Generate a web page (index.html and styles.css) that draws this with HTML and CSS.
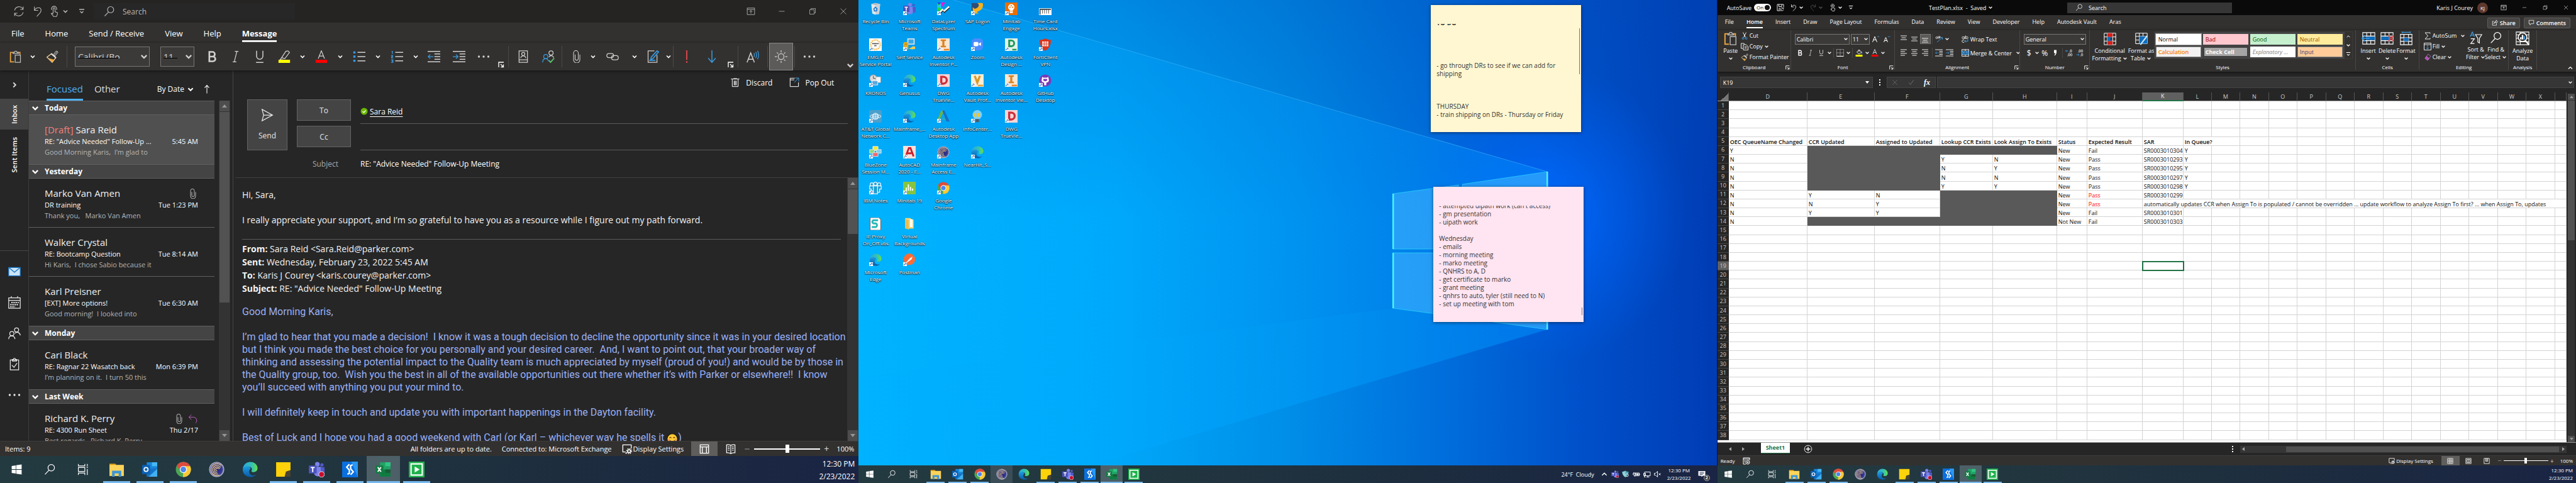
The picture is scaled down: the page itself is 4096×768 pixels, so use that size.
FILE: index.html
```html
<!DOCTYPE html>
<html lang="en">
<head>
<meta charset="utf-8">
<title>Desktop</title>
<link rel="stylesheet" href="styles.css">
</head>
<body>
<svg class="sprite" width="0" height="0" aria-hidden="true">
<defs>
<linearGradient id="gEdge" x1="0" y1="0" x2="1" y2="0"><stop offset="0" stop-color="#2aa5e0"/><stop offset=".6" stop-color="#35c1b5"/><stop offset="1" stop-color="#63e04a"/></linearGradient>
<linearGradient id="gEdge2" x1="0" y1="0" x2="0" y2="1"><stop offset="0" stop-color="#1b9de2"/><stop offset="1" stop-color="#0c59a4"/></linearGradient>
<radialGradient id="gOrb"><stop offset="0" stop-color="#1c1c7c"/><stop offset=".75" stop-color="#3a3f92"/><stop offset="1" stop-color="#c9c9d8"/></radialGradient>
</defs>
<symbol id="chev" viewBox="0 0 10 10"><path d="M2 3.5l3 3 3-3" stroke-width="1.6"/></symbol>
<symbol id="chevup" viewBox="0 0 10 10"><path d="M2 6.5l3-3 3 3" stroke-width="1.2"/></symbol>
<symbol id="more" viewBox="0 0 24 24"><g fill="currentColor" stroke="none"><circle cx="3" cy="12" r="2"/><circle cx="12" cy="12" r="2"/><circle cx="21" cy="12" r="2"/></g></symbol>
<symbol id="launch" viewBox="0 0 10 10"><path d="M1 9V1h8M4 4l4.500 4.500M8.500 4.500v4h-4" stroke-width="1.3"/></symbol>
<symbol id="cust" viewBox="0 0 10 10"><path d="M1 2h8M2.500 5l2.500 2.500L7.500 5" stroke-width="1.3"/></symbol>
<symbol id="sync" viewBox="0 0 24 24"><path d="M3 10a9.500 9.500 0 0 1 17.500-3M21 2v6h-6M21 14a9.500 9.500 0 0 1-17.500 3M3 22v-6h6"/></symbol>
<symbol id="undo" viewBox="0 0 24 24"><path d="M5 2v8h8M5 10c5-8 14-7 14 0 0 5-5 8-9 13"/></symbol>
<symbol id="redo" viewBox="0 0 24 24"><path d="M19 2v8h-8M19 10C14 2 5 3 5 10c0 5 5 8 9 13"/></symbol>
<symbol id="touch" viewBox="0 0 24 24"><path d="M10 16V6.500a2 2 0 0 1 4 0V13l5 1.500v4L17 23h-6l-5-6 2-1 2 2M7 9a5.500 5.500 0 1 1 10 0"/></symbol>
<symbol id="glass" viewBox="0 0 24 24"><circle cx="14.500" cy="8.500" r="6.500"/><path d="M10 13.500L2 22"/></symbol>
<symbol id="ribbonup" viewBox="0 0 24 24"><path d="M2 3h20v18H2zM2 7h20M12 18v-8M8 13.500l4-4 4 4"/></symbol>
<symbol id="min" viewBox="0 0 24 24"><path d="M3 12h18"/></symbol>
<symbol id="restore" viewBox="0 0 24 24"><path d="M3 7h14v14H3zM7 7V3h14v14h-4"/></symbol>
<symbol id="close" viewBox="0 0 24 24"><path d="M3 3l18 18M21 3L3 21"/></symbol>
<symbol id="paste" viewBox="0 0 24 24"><path d="M8 4H2v18h7M16 4h4v4" stroke="#e8a33d" stroke-width="2.200"/><path d="M7 6V4h2.500a2.500 2.500 0 0 1 5 0H17v2zM11 9h10v14H11z" stroke="#bdbdbd"/></symbol>
<symbol id="brush" viewBox="0 0 24 24"><path d="M22 2l-7 8M20 1l3 3-6 7-3-3z" stroke="#ccc" stroke-width="1.200"/><path d="M10 7l9 7-7 9L2 13z" stroke="#ffe0a8"/><path d="M5 15l11 3-4 5z" fill="#f0a63c" stroke="none"/><path d="M10 6l9 8" stroke="#ddd" stroke-width="2.500"/></symbol>
<symbol id="bold" viewBox="0 0 24 24"><path d="M7 3h6a4.500 4.500 0 0 1 0 9H7zM7 12h7a4.500 4.500 0 0 1 0 9H7z" stroke-width="3.200"/></symbol>
<symbol id="italic" viewBox="0 0 24 24"><path d="M10 2h7M6 22h7M14 2l-5 20"/></symbol>
<symbol id="under" viewBox="0 0 24 24"><path d="M6 1v10a6 6 0 0 0 12 0V1M5 23h14" stroke-width="1.800"/></symbol>
<symbol id="hilite" viewBox="0 0 24 24"><path d="M19 1l3 3-9 12-6-2 8-12zM7 14l-3 4h6"/><path d="M1 18h22v6H1z" fill="#ff0" stroke="none"/></symbol>
<symbol id="fcolor" viewBox="0 0 24 24"><path d="M6 16L12 1l6 15M8 11h8"/><path d="M1 18h22v6H1z" fill="#f00" stroke="none"/></symbol>
<symbol id="bullets" viewBox="0 0 24 24"><path d="M9 4h15M9 12h15M9 20h15" stroke-width="1.800"/><path d="M1 4h4M1 12h4M1 20h4" stroke="#3a9be0" stroke-width="4"/></symbol>
<symbol id="nums" viewBox="0 0 24 24"><path d="M9 4h15M9 12h15M9 20h15" stroke-width="1.800"/><path d="M2 2h1.500v5M1 10h3v2H2v2.500h3M1 18h3.500v5H1M2 20.500h2.500" stroke="#3a9be0"/></symbol>
<symbol id="outdent" viewBox="0 0 24 24"><path d="M0 2h24M13 7h11M13 12h11M13 17h11M0 22h24" stroke-width="1.800"/><path d="M11 12H1M5 8l-4 4 4 4" stroke="#3a9be0"/></symbol>
<symbol id="indent" viewBox="0 0 24 24"><path d="M0 2h24M13 7h11M13 12h11M13 17h11M0 22h24" stroke-width="1.800"/><path d="M0 12h10M6 8l4 4-4 4" stroke="#3a9be0"/></symbol>
<symbol id="card" viewBox="0 0 24 24"><path d="M4 1h16v22H4zM4 18h16M7 15c1-6 9-6 10 0"/><circle cx="12" cy="7" r="3"/></symbol>
<symbol id="people" viewBox="0 0 24 24"><circle cx="17" cy="5" r="4"/><path d="M13 13c2-4 8-3 9 1"/><g stroke="#3a9be0"><circle cx="7" cy="12" r="4"/><path d="M1 23c0-9 10-9 11-2"/></g><path d="M13 19l3 4 7-8" stroke="#5fce70" stroke-width="2"/></symbol>
<symbol id="people2" viewBox="0 0 24 24"><circle cx="16" cy="5.500" r="4"/><circle cx="7" cy="12.500" r="4"/><path d="M1 23c0-8 11-8 12 0M13 12c4-4 10-1 10 4"/></symbol>
<symbol id="clip" viewBox="0 0 24 24"><path d="M9 8v8a3 3 0 0 0 6 0V5a4 4 0 0 0-9 0v13a6 6 0 0 0 12 0V8" stroke-width="1.300"/></symbol>
<symbol id="link" viewBox="0 0 24 24"><rect x="1" y="6" width="13" height="8" rx="4"/><rect x="10" y="10" width="13" height="8" rx="4"/></symbol>
<symbol id="sign" viewBox="0 0 24 24"><path d="M15 1H3v22h17V9"/><path d="M20 1l3 2-11 13-4 2 1-5zM5 19h12" stroke="#3a9be0" stroke-width="2"/></symbol>
<symbol id="bang" viewBox="0 0 24 24"><path d="M12 0v18M12 20.500V24" stroke="#e0484c" stroke-width="2.200"/></symbol>
<symbol id="down" viewBox="0 0 24 24"><path d="M12 0v22M5 15l7 8 7-8" stroke="#3a9be0" stroke-width="1.800"/></symbol>
<symbol id="read" viewBox="0 0 24 24"><path d="M1 23L8 5l7 18M3.500 17h9" stroke-width="1.800"/><path d="M14 5q2 4 0 8M17.500 3q3 6 0 12M21 1q4 8 0 16" stroke="#3a9be0"/></symbol>
<symbol id="sun" viewBox="0 0 24 24"><circle cx="12" cy="12" r="5.500"/><path d="M12 0v4M12 20v4M0 12h4M20 12h4M4 4l2.500 2.500M17.500 17.500L20 20M4 20l2.500-2.500M17.500 6.500L20 4"/></symbol>
<symbol id="trash" viewBox="0 0 24 24"><path d="M2 4h20M8 3h8M5 5v17h14V5M9.500 8v11M12 8v11M14.500 8v11"/></symbol>
<symbol id="popout" viewBox="0 0 24 24"><path d="M13 2H2v20h20V12M2 6h10"/><path d="M12 12L22 2M14 1.500h8.500V10" stroke="#3a9be0"/></symbol>
<symbol id="send" viewBox="0 0 24 24"><path d="M2 1l20 11L2 23l3-11zM5 12h17"/></symbol>
<symbol id="uparr" viewBox="0 0 24 24"><path d="M12 23V2M6 8l6-7 6 7" stroke-width="1.800"/></symbol>
<symbol id="mail" viewBox="0 0 24 24"><path d="M1 4h22v16H1z" fill="#c9e3f8" stroke="#1a78c8"/><path d="M1 4l11 9L23 4" stroke="#1a78c8"/></symbol>
<symbol id="cal" viewBox="0 0 24 24"><path d="M1 3h22v20H1zM1 8h22M6 0v4M18 0v4"/><path d="M6 12h14M4 16h16M4 20h9" stroke-dasharray="2.500 1.500" stroke-width="2.500"/></symbol>
<symbol id="task" viewBox="0 0 24 24"><path d="M4 4h16v19H4zM8 6V3h2a2 2 0 0 1 4 0h2v3zM7 14l4 4 6-8"/></symbol>
<symbol id="reply" viewBox="0 0 24 24"><path d="M8 2L2 8l6 6M2 8h12a8 8 0 0 1 4 14" stroke="#b45cb8"/></symbol>
<symbol id="dispset" viewBox="0 0 24 24"><path d="M9 19H2V2h20v9M8 22h4" stroke-width="2"/><circle cx="17" cy="17" r="3.500" stroke-width="2.500"/><circle cx="17" cy="17" r="6" stroke-dasharray="2.500 2.200" stroke-width="2"/></symbol>
<symbol id="vnormal" viewBox="0 0 24 24"><path d="M2 2h20v20H2zM2 7h20M7 7v15M17 7v15" stroke-width="2"/></symbol>
<symbol id="vread" viewBox="0 0 24 24"><path d="M12 3q-5-2-10-1v19q5-1 10 2 5-3 10-2V2q-5-1-10 1v20M5 7h4M5 11h4M5 15h4M15 7h4M15 11h4M15 15h4" stroke-width="1.800"/></symbol>
<symbol id="vgrid" viewBox="0 0 24 24"><path d="M2 2h20v20H2zM2 9h20M2 15h20M9 2v20M15 2v20" stroke-width="1.800"/></symbol>
<symbol id="vpage" viewBox="0 0 24 24"><path d="M2 2h20v20H2zM6 6h12v12H6zM9 10h6M9 14h6" stroke-width="2"/></symbol>
<symbol id="vbreak" viewBox="0 0 24 24"><path d="M2 2h20v20H2zM8 2v11h8V2M12 2v10" stroke-width="2"/></symbol>
<symbol id="macro" viewBox="0 0 24 24"><path d="M22 9V2H2v20h8M2 6h20M5 11h4M5 15h3" stroke-width="2"/><circle cx="16" cy="16" r="6" stroke-width="2"/><circle cx="16" cy="16" r="2" fill="currentColor"/></symbol>
<symbol id="save" viewBox="0 0 24 24"><path d="M10 22H2V2h20v8M7 2v7h9V2M8 21v-7h3" stroke-width="1.800"/><path d="M12 17a5 5 0 0 1 9-2M22 11v4h-4M22 18a5 5 0 0 1-9 2M12 23v-4h4" stroke-width="1.600"/></symbol>
<symbol id="cut" viewBox="0 0 24 24"><path d="M7 1l8 16M17 1L9 17" stroke-width="1.800"/><g stroke="#3a9be0" stroke-width="2"><circle cx="7" cy="20" r="3"/><circle cx="17" cy="20" r="3"/></g></symbol>
<symbol id="copy" viewBox="0 0 24 24"><path d="M7 18H1V2h9l3 3M8 6h9l6 6v11H8zM12 13h7M12 17h7" stroke-width="1.800"/></symbol>
<symbol id="growA" viewBox="0 0 24 24"><path d="M1 22L8 4l7 18M3.500 15h9" stroke-width="2"/><path d="M16 6l3-3 3 3" stroke="#3a9be0" stroke-width="2"/></symbol>
<symbol id="shrinkA" viewBox="0 0 24 24"><path d="M3 22L9 7l6 15M5 17h8" stroke-width="2"/><path d="M16 3l3 3 3-3" stroke="#3a9be0" stroke-width="2"/></symbol>
<symbol id="borders" viewBox="0 0 24 24"><path d="M1 1h22v22M1 1v22M12 1v22M1 12h22" stroke-dasharray="2 2"/><path d="M1 23h22" stroke-width="2.500"/></symbol>
<symbol id="bucket" viewBox="0 0 24 24"><path d="M5 10l7-8 8 8-8 6zM12 2v7" stroke-width="1.800"/><path d="M21 9v6" stroke="#3a9be0" stroke-width="2.500"/><path d="M1 18h22v6H1z" fill="#ff0" stroke="none"/></symbol>
<symbol id="alT" viewBox="0 0 24 24"><path d="M2 2h20M5 8h14M2 14h20" stroke-width="1.800"/></symbol>
<symbol id="alM" viewBox="0 0 24 24"><path d="M2 6h20M5 12h14M2 18h20" stroke-width="1.800"/></symbol>
<symbol id="alB" viewBox="0 0 24 24"><path d="M2 10h20M5 16h14M2 22h20" stroke-width="1.800"/></symbol>
<symbol id="alL" viewBox="0 0 24 24"><path d="M2 2h20M2 8h14M2 14h20M2 20h14" stroke-width="1.800"/></symbol>
<symbol id="alC" viewBox="0 0 24 24"><path d="M2 2h20M5 8h14M2 14h20M5 20h14" stroke-width="1.800"/></symbol>
<symbol id="alR" viewBox="0 0 24 24"><path d="M2 2h20M8 8h14M2 14h20M8 20h14" stroke-width="1.800"/></symbol>
<symbol id="orient" viewBox="0 0 24 24"><circle cx="5" cy="8" r="3"/><path d="M7 5l4 6M10 3l5 7"/><circle cx="14" cy="6" r="2.500"/><path d="M6 22L22 8M16 7h7v7" stroke="#3a9be0" stroke-width="1.800"/></symbol>
<symbol id="wrap" viewBox="0 0 24 24"><circle cx="5" cy="8" r="3.500"/><path d="M9 4v8M13 1v11M9 17a4 4 0 1 0 0 4" stroke-width="1.800"/><circle cx="17" cy="8" r="3.500"/><path d="M20 13v6h-9M14 16l-3 3 3 4" stroke="#3a9be0" stroke-width="2"/></symbol>
<symbol id="merge" viewBox="0 0 24 24"><path d="M1 1h22v22H1zM1 6h22M1 18h22M12 1v5M12 18v5" stroke-width="1.600"/><path d="M2 7h20v10H2z" fill="#0e4f83" stroke="#3a9be0"/><path d="M5 12h14M8 9l-3 3 3 3M16 9l3 3-3 3" stroke="#8fd0ff"/></symbol>
<symbol id="cond" viewBox="0 0 24 24"><path d="M1 1h22v22H1zM1 8h22M1 16h22M7 1v22M17 1v22" stroke-width="1.200"/><path d="M7 1h10v7H7zM7 16h10v7H7z" fill="#d8201c" stroke="none"/><path d="M7 8h6v8H7z" fill="#0f6cbd" stroke="none"/></symbol>
<symbol id="fmtTable" viewBox="0 0 24 24"><path d="M1 1h22v20H1zM1 7h22M1 14h22M8 1v20M15 1v20" stroke-width="1.200"/><path d="M8 7h15v14H8z" fill="#0f6cbd" stroke="none"/><path d="M23 6L13 19l-3 4" stroke="#cfe6f8" stroke-width="2.500"/></symbol>
<symbol id="cinsert" viewBox="0 0 24 24"><path d="M2 2h21v20H2zM2 8h21M2 16h21M9 2v20M16 2v20" stroke-width="1.200"/><path d="M8 9h15v6H8z" fill="#0f6cbd" stroke="none"/><path d="M14 12H1M6 7l-5 5 5 5" stroke="#3a9be0" stroke-width="1.800"/></symbol>
<symbol id="cdelete" viewBox="0 0 24 24"><path d="M1 2h21v20H1zM1 8h21M1 16h21M8 2v20M15 2v20" stroke-width="1.200"/><path d="M2 9h13v6H2z" fill="#0f6cbd" stroke="none"/><path d="M14 7l9 10M23 7l-9 10" stroke="#e0484c" stroke-width="1.800"/></symbol>
<symbol id="cformat" viewBox="0 0 24 24"><path d="M2 5h20v18H2zM2 11h20M2 17h20M8 5v18M16 5v18" stroke-width="1.200"/><path d="M8 11h8v6H8z" fill="#0f6cbd" stroke="none"/><path d="M5 1.500h14M5 0v3M19 0v3" stroke="#3a9be0"/></symbol>
<symbol id="sigma" viewBox="0 0 24 24"><path d="M20 5V2H4l9 10L4 22h16v-3" stroke-width="1.800"/></symbol>
<symbol id="fill" viewBox="0 0 24 24"><path d="M1 1h22v22H1zM1 6h22" stroke-width="1.800"/><path d="M12 8v12M8 16l4 4 4-4" stroke="#3a9be0" stroke-width="2"/></symbol>
<symbol id="clear" viewBox="0 0 24 24"><path d="M14 2l8 7-10 13-8-7z" stroke="#c678c9" stroke-width="1.600"/><path d="M9 9l8 7-5 6-8-7z" fill="#b04ab5" stroke="#c678c9"/></symbol>
<symbol id="sort" viewBox="0 0 24 24"><path d="M1 10L5 1l4 9M2.500 7h5" stroke="#3a9be0" stroke-width="1.600"/><path d="M2 14h7l-7 9h7M11 6h12l-4.500 7v9l-3-2v-7z" stroke-width="1.400"/></symbol>
<symbol id="analyze" viewBox="0 0 24 24"><path d="M1 1h22v22H1zM1 6h22M1 12h22M1 18h22M8 1v22" stroke-width="1.200"/><circle cx="12" cy="10" r="7.500" fill="#323130" stroke-width="1.800"/><path d="M9 14v-4M12 14V6" stroke-width="2.500"/><path d="M15 14V8" stroke="#3a9be0" stroke-width="2.500"/><path d="M17 16l6 7" stroke-width="2.500"/></symbol>
<symbol id="share" viewBox="0 0 24 24"><path d="M8 7H3v15h15v-6M8 16q1-8 9-9V2l6 7-6 6v-5q-6 0-9 6z" stroke-width="1.800"/></symbol>
<symbol id="comment" viewBox="0 0 24 24"><path d="M3 3h18v13H11l-4 5v-5H3z" stroke-width="1.800"/></symbol>
<symbol id="decinc" viewBox="0 0 24 24"><path d="M9 6H1M4 3L1 6l3 3" stroke="#3a9be0" stroke-width="1.800"/><ellipse cx="18" cy="6" rx="2.500" ry="4"/><ellipse cx="12" cy="18" rx="2.500" ry="4"/><ellipse cx="19" cy="18" rx="2.500" ry="4"/><path d="M13 10h1.500M7 22h1.500" stroke-width="2"/></symbol>
<symbol id="decdec" viewBox="0 0 24 24"><path d="M1 18h9M7 15l3 3-3 3" stroke="#3a9be0" stroke-width="1.800"/><ellipse cx="12" cy="6" rx="2.500" ry="4"/><ellipse cx="19" cy="6" rx="2.500" ry="4"/><ellipse cx="19" cy="18" rx="2.500" ry="4"/><path d="M7 10h1.500M13 22h1.500" stroke-width="2"/></symbol>
<symbol id="comma" viewBox="0 0 24 24"><path d="M8 3h8v8q-1 7-6 10l-1-2q3-2 3-6H8z" fill="currentColor" stroke="none"/></symbol>
<symbol id="plusc" viewBox="0 0 24 24"><circle cx="12" cy="12" r="10"/><path d="M12 6v12M6 12h12" stroke-width="2.500"/></symbol>
<symbol id="check" viewBox="0 0 24 24"><path d="M3 13l6 7L21 3" stroke-width="2"/></symbol>
<symbol id="win" viewBox="0 0 24 24"><path d="M2 5l8-1.300v7.800H2zM11 3.500L22 2v9.500H11zM2 12.500h8v7.800L2 19zM11 12.500h11V22l-11-1.500z" fill="#fff" stroke="none"/></symbol>
<symbol id="tview" viewBox="0 0 24 24"><path d="M2 1v4h13V1M2 8h13v8H2zM2 23v-4h13v4M20 1v4M20 11v12M18.500 7.500h3"/></symbol>
<symbol id="folder" viewBox="0 0 24 24"><path d="M1 3h9l2 3H1z" fill="#e09a10"/><path d="M1 5h22v17H1z" fill="#fbd35a"/><path d="M5 23v-9h14v9h-4v-5H9v5z" fill="#3d95d8"/></symbol>
<symbol id="outlook" viewBox="0 0 24 24"><path d="M7 1h16v12H7z" fill="#1a86d8"/><path d="M15 1h8v6h-8z" fill="#45b7f5"/><path d="M7 11l16-1v13H7z" fill="#1573c7"/><path d="M23 11L10 23h13z" fill="#41b0f0"/><rect y="5" width="12" height="14" rx="1" fill="#0a62b8"/><circle cx="6" cy="12" r="3" fill="none" stroke="#fff" stroke-width="1.600"/></symbol>
<symbol id="chrome" viewBox="0 0 24 24"><circle cx="12" cy="12" r="11.500" fill="#4aa653"/><path d="M12 12L2 6.500A11.500 11.500 0 0 1 22.500 7z" fill="#dd4b3e"/><path d="M12 7h10.500A11.500 11.500 0 0 1 11.500 23.500z" fill="#fcc934"/><path d="M2 6.200L8 15l4-3V7z" fill="#dd4b3e"/><circle cx="12" cy="12" r="5.400" fill="#fff"/><circle cx="12" cy="12" r="4.300" fill="#4a87ee"/></symbol>
<symbol id="orb" viewBox="0 0 24 24"><circle cx="12" cy="12" r="11.500" fill="url(#gOrb)"/><g fill="none" stroke="#e6c478" stroke-width="1.200"><path d="M19 6a9 9 0 1 0-3 14.500M18 9a6.500 6.500 0 1 0-4 9.500M16.500 11a4.200 4.200 0 1 0-3.500 5.500M14.500 11.500a2 2 0 1 0-1.500 2.500"/></g></symbol>
<symbol id="edge" viewBox="0 0 24 24"><path d="M1 11C2 4 7 .5 12.500.5 19 .5 23.500 5 23.500 10c0 4-3 6-6.500 6-2.500 0-3.500-1-2.500-2.500C17 9 9 4 1 11z" fill="url(#gEdge)"/><path d="M1 11c3-5 12-5 12 0-3 1-4 9 3 10 2 .3 4-.5 5.500-2C19 23 15 24 12 23.500 5 23 .5 18 1 11z" fill="url(#gEdge2)"/></symbol>
<symbol id="sticky" viewBox="0 0 24 24"><path d="M1 1h22v12l-8 10H1z" fill="#fdd20a"/><path d="M23 13v10h-9l2-8z" fill="#4a4430"/></symbol>
<symbol id="teams" viewBox="0 0 24 24"><circle cx="13" cy="4" r="3.500" fill="#7b83eb"/><circle cx="20" cy="5" r="2.500" fill="#5059c9"/><path d="M8 8h11v9a5.500 5.500 0 0 1-11 0z" fill="#7b83eb"/><path d="M18 8.500h6v7a4 4 0 0 1-5 4z" fill="#5059c9"/><rect y="6" width="12" height="12" rx="1" fill="#4b53bc"/><path d="M3 9h6M6 9v7" stroke="#fff" stroke-width="1.800"/></symbol>
<symbol id="teamsrec" viewBox="0 0 24 24"><circle cx="13" cy="4" r="3.500" fill="#7b83eb"/><circle cx="20" cy="5" r="2.500" fill="#5059c9"/><path d="M8 8h11v9a5.500 5.500 0 0 1-11 0z" fill="#7b83eb"/><path d="M18 8.500h6v7a4 4 0 0 1-5 4z" fill="#5059c9"/><rect y="6" width="12" height="12" rx="1" fill="#4b53bc"/><path d="M3 9h6M6 9v7" stroke="#fff" stroke-width="1.800"/><circle cx="19.500" cy="19.500" r="4.300" fill="#c50f2f" stroke="#fff" stroke-width=".8"/></symbol>
<symbol id="snag" viewBox="0 0 24 24"><path d="M0 0h24v24H0z" fill="#0a70e0"/><path d="M14 0h10v24z" fill="#2a98f4"/><path d="M11 4L7 8.500l4 4.500v5l-3 1M13 20l4-4.500-4-4.500V6l3-1" fill="none" stroke="#fff" stroke-width="2.200"/></symbol>
<symbol id="excel" viewBox="0 0 24 24"><path d="M7 1h16v22H7z" fill="#21a366"/><path d="M7 12h16v11H7z" fill="#107c41"/><path d="M15 1h8v6h-8z" fill="#33c481"/><path d="M15 12h8v5h-8z" fill="#185c37"/><rect y="6" width="12" height="12" rx="1" fill="#107c41"/><path d="M3.500 8.500l5 7M8.500 8.500l-5 7" stroke="#fff" stroke-width="1.800"/></symbol>
<symbol id="play" viewBox="0 0 24 24"><path d="M0 0h24v24H0z" fill="#1eb14b"/><path d="M3.500 3.500h17v17h-17z" fill="none" stroke="#fff" stroke-width="2"/><path d="M9 7.500l7.500 4.500L9 16.500z" fill="#fff"/></symbol>
<symbol id="app-bin" viewBox="0 0 24 24"><path d="M4 3l8-2 9 2-2 19-8 1-5-2z" fill="#e3e8ec"/><path d="M4 3l8 2 9-2-9-2z" fill="#b4bcc3"/><path d="M12 5v18l7-1 2-19z" fill="#c9d0d6"/><path d="M9 12l3-3 3 3-1 4h-4z" fill="none" stroke="#1f7ad2" stroke-width="2"/></symbol>
<symbol id="app-data" viewBox="0 0 24 24"><path d="M0 0h8v8z" fill="#2b3be0"/><path d="M8 0h8L8 10z" fill="#e818d8"/><path d="M0 0l8 10v6H0z" fill="#19d83a"/><path d="M0 8l8-8v12z" fill="#20c8f0"/><path d="M4 20l6-6 3 3 10-9" fill="none" stroke="#fff" stroke-width="3.500"/><path d="M5 22l6-6 3 3 10-9" fill="none" stroke="#222" stroke-width="1.500"/></symbol>
<symbol id="app-sap" viewBox="0 0 24 24"><path d="M1 1h14v14H1z" fill="#2c4f7c"/><path d="M4 21l-1-12 4 3q8-2 8-8l-3-3h10q4 12-11 17l3 3z" fill="#f6b21b"/></symbol>
<symbol id="app-engage" viewBox="0 0 24 24"><path d="M0 0h24v24H0z" fill="#ea6f00"/><circle cx="12" cy="9" r="6" fill="#fff"/><path d="M9 13h6v7H9z" fill="#fff"/><g fill="#ea6f00"><circle cx="12" cy="6" r="1.200"/><circle cx="9.500" cy="9" r="1.200"/><circle cx="14.500" cy="9" r="1.200"/><path d="M9 16h6v1H9z"/></g></symbol>
<symbol id="app-card" viewBox="0 0 24 24"><path d="M0 11h24v13H0z" fill="#fff"/><path d="M1 12h22v2H1zM1 14h2v9H1zM6 14h1v7H6zM10 14h1v7h-1zM14 14h1v7h-1zM18 14h1v7h-1z" fill="#444"/></symbol>
<symbol id="app-emg" viewBox="0 0 24 24"><path d="M0 0h24v24H0z" fill="#fff"/><circle cx="12" cy="12" r="9" fill="none" stroke="#f0b43c" stroke-width="3" stroke-dasharray="2 1.500"/><path d="M6 10h12M10 14h4" stroke="#333" stroke-width="2" stroke-dasharray="2 .6"/></symbol>
<symbol id="app-self" viewBox="0 0 24 24"><path d="M8 0h14v12H8z" fill="#d8e4ea"/><path d="M10 2h10v8H10z" fill="#3aa8e8"/><path d="M0 12q0-5 5-5t5 5v9H0z" fill="#e0ac24"/><path d="M3 12q2-3 4 0" stroke="#8a6408" fill="none"/><path d="M11 20l8-5 4 1v4l-5 1z" fill="#f3ca4e"/></symbol>
<symbol id="app-inv" viewBox="0 0 24 24"><path d="M0 0h24v24H0z" fill="#fbe6d2"/><path d="M7 2h10v3h-3v9h3v3H7v-3h3V5H7z" fill="#d98324"/><path d="M13 20h10v3H13z" fill="#e8862a"/></symbol>
<symbol id="app-zoom" viewBox="0 0 24 24"><rect x="1" width="22" height="23" rx="7" fill="#4a8cff"/><rect x="5" y="7" width="9" height="8" rx="2" fill="#fff"/><path d="M15 10l4-2.500v7L15 12z" fill="#fff"/></symbol>
<symbol id="app-rev" viewBox="0 0 24 24"><path d="M0 0h24v24H0z" fill="#e3f2e8"/><path d="M8 4h4a5.500 5.500 0 0 1 0 11H8z" fill="none" stroke="#1f9a58" stroke-width="3.500"/><path d="M14 20h8v3h-8z" fill="#1f9a58"/></symbol>
<symbol id="app-forti" viewBox="0 0 24 24"><path d="M12 0q5 3 11 3 0 15-11 21Q1 18 1 3q6 0 11-3z" fill="#d8361e"/><path d="M6 6h12v9H6z" fill="#fff"/><path d="M6 9h12M6 12h12M10 6v9M14 6v9" stroke="#d8361e"/></symbol>
<symbol id="app-kronos" viewBox="0 0 24 24"><circle cx="8" cy="8" r="7" fill="#dadada" stroke="#888"/><path d="M8 3v5h4" stroke="#333" fill="none"/><path d="M13 5h9v11h-9z" fill="#f4f4f4" stroke="#999" stroke-width=".6"/><path d="M5 12h12v9H5z" fill="#fff"/><path d="M6 13h10v7H6z" fill="#5ea6dc"/></symbol>
<symbol id="app-dwg" viewBox="0 0 24 24"><path d="M0 0h24v24H0z" fill="#f9d6d6"/><path d="M8 5h4a6 6 0 0 1 0 13H8z" fill="none" stroke="#cc2f3c" stroke-width="4"/></symbol>
<symbol id="app-vault" viewBox="0 0 24 24"><path d="M0 0h24v24H0z" fill="#fbeed6"/><path d="M7 3l5 13 5-13" fill="none" stroke="#d9992a" stroke-width="4"/><path d="M13 20h10v3H13z" fill="#e8a43a"/></symbol>
<symbol id="app-git" viewBox="0 0 24 24"><circle cx="12" cy="12" r="11.500" fill="#7a3ab8"/><path d="M6 5l3 1.500h6L18 5l.5 4q2 6-4.500 7v5h-4v-5q-6.500-1-4.500-7z" fill="#fff"/><path d="M8.500 9h7q1.500 4-3.500 4.500Q7 13 8.500 9z" fill="#7a3ab8"/></symbol>
<symbol id="app-att" viewBox="0 0 24 24"><rect width="24" height="24" rx="3" fill="#4aa0cc"/><g fill="none" stroke="#fff"><circle cx="12" cy="12" r="6"/><path d="M6 12h12M12 6v12M9 7q-2 5 0 10M15 7q2 5 0 10"/><ellipse cx="12" cy="12" rx="10.500" ry="3.500"/></g></symbol>
<symbol id="app-desk" viewBox="0 0 24 24"><path d="M0 20L8 1h6L5 18z" fill="#6fb43f"/><path d="M10 1h4l10 21h-6z" fill="#1a6fc0"/><path d="M5 18l9-3 3 4z" fill="#2ab0b8"/></symbol>
<symbol id="app-bulb" viewBox="0 0 24 24"><circle cx="12" cy="9" r="9" fill="#7fd0f4"/><path d="M6 6h4v7H6zM12 6h5v7h-5z" fill="#f6c32a"/><path d="M9 17h6v6H9z" fill="#4d5a64"/></symbol>
<symbol id="app-blue" viewBox="0 0 24 24"><path d="M7 1h10v8H7z" fill="#f3ea38" stroke="#eee"/><path d="M1 7h9v7H1z" fill="#8ed87c" stroke="#eee"/><path d="M14 7h9v7h-9z" fill="#7ed0ee" stroke="#eee"/><path d="M7 13h10v7H7z" fill="#f0676c" stroke="#eee"/></symbol>
<symbol id="app-acad" viewBox="0 0 24 24"><path d="M0 0h24v24H0z" fill="#f8e0dc"/><path d="M5 20l6-16h3l6 16M9 14h7" fill="none" stroke="#c8202c" stroke-width="3.500"/></symbol>
<symbol id="app-ibm" viewBox="0 0 24 24"><g fill="#1c9fd8" stroke="#e8f6fc" stroke-width="1.500"><circle cx="5" cy="5" r="3"/><circle cx="19" cy="5" r="3"/><path d="M1 8h7v12H4v-6H1zM16 8h7v6h-3v6h-4z"/><circle cx="12" cy="4" r="3.200"/><path d="M8 8h8v15H8z"/></g></symbol>
<symbol id="app-mini" viewBox="0 0 24 24"><path d="M0 0h24v24H0z" fill="#86c440"/><path d="M6 17v-6M10 17V5M14 17v-7M18 17v-4" stroke="#fff" stroke-width="2.200"/></symbol>
<symbol id="app-vbs" viewBox="0 0 24 24"><path d="M2 0h17l3 4v20H2z" fill="#fff" stroke="#555"/><path d="M17 5H8q-4 3 0 6h5q4 3 0 7H5" fill="none" stroke="#26b8b8" stroke-width="3.500"/></symbol>
<symbol id="app-fold" viewBox="0 0 24 24"><path d="M4 1h10l2 3h4v17H4z" fill="#f5d778"/><path d="M13 3h5v15h-5z" fill="#fff"/><path d="M4 2l7 3v18l-7-3z" fill="#e9bf52"/></symbol>
<symbol id="app-post" viewBox="0 0 24 24"><circle cx="12" cy="11" r="11" fill="#fc6c37"/><path d="M6 17l7-8 5-3-2 5-8 6z" fill="#fff"/></symbol>
<symbol id="shortcut" viewBox="0 0 8 8"><path d="M0 0h8v8H0z" fill="#fff"/><path d="M2 7V4.500h3M3.500 2H6.500v3" fill="none" stroke="#1f5fb0" stroke-width="1.200"/></symbol>
<symbol id="smile" viewBox="0 0 24 24"><circle cx="12" cy="12" r="11" fill="#fcc934" stroke="#111" stroke-width="1.500"/><path d="M6 10q2-3 4 0M14 10q2-3 4 0M7 15q5 5 10 0" fill="none" stroke="#6b3f12" stroke-width="1.600"/><circle cx="5" cy="14" r="2" fill="#f28b6c"/><circle cx="19" cy="14" r="2" fill="#f28b6c"/></symbol>
<symbol id="presence" viewBox="0 0 24 24"><circle cx="12" cy="12" r="11" fill="#6bb700"/><path d="M7 12l4 4 6-7" fill="none" stroke="#fff" stroke-width="2.500"/></symbol>
<symbol id="shield" viewBox="0 0 24 24"><path d="M11 1q5 3 10 3 0 12-10 18Q1 16 1 4q5 0 10-3z" fill="#4fa8b8"/><path d="M11 1v21Q1 16 1 4q5 0 10-3z" fill="#8fd0d8"/><circle cx="16" cy="15" r="4.500" fill="none" stroke="#ddd" stroke-width="2"/></symbol>
<symbol id="batt" viewBox="0 0 24 24"><g fill="none" stroke="#fff" stroke-width="1.800"><path d="M9 8h12v9H9zM22.500 11v3M3 6v4M7 6v4M1 10h8v3q-4 4-8 0zM5 15v3h4"/></g><path d="M11 10h8v5h-8z" fill="#fff"/></symbol>
<symbol id="net" viewBox="0 0 24 24"><path d="M4 5h18v12H4zM10 21h9M14 17v4M1 9h6v7H1zM3 16v5h4" fill="none" stroke="#fff" stroke-width="1.800"/></symbol>
<symbol id="vol" viewBox="0 0 24 24"><path d="M1 9h4l6-6v18l-6-6H1zM15 9l6 6M21 9l-6 6" fill="none" stroke="#fff" stroke-width="1.800"/></symbol>
<symbol id="notif" viewBox="0 0 24 24"><path d="M1 2h22v15h-8l-4 4v-4H1z" fill="#fff"/><path d="M5 6h14M5 9.500h14M5 13h10" stroke="#1c2a44" stroke-width="1.600"/></symbol>
</svg>

<main class="screens">
<section class="screen outlook" aria-label="Outlook">
  <header class="o-title">
    <button class="tb" aria-label="Sync"><svg class="i18"><use href="#sync"/></svg></button>
    <button class="tb" aria-label="Undo"><svg class="i18"><use href="#undo"/></svg></button>
    <button class="tb touch" aria-label="Touch mode"><svg class="i18"><use href="#touch"/></svg><svg class="i10"><use href="#chev"/></svg></button>
    <button class="tb" aria-label="Customize"><svg class="i10"><use href="#cust"/></svg></button>
    <label class="o-search"><svg class="i18"><use href="#glass"/></svg><input type="text" placeholder="Search" aria-label="Search"></label>
    <div class="wctl">
      <button aria-label="Ribbon display"><svg class="i14"><use href="#ribbonup"/></svg></button>
      <button aria-label="Minimize"><svg class="i12"><use href="#min"/></svg></button>
      <button aria-label="Restore"><svg class="i12"><use href="#restore"/></svg></button>
      <button aria-label="Close"><svg class="i12"><use href="#close"/></svg></button>
    </div>
  </header>
  <nav class="o-tabs">
    <a href="#file">File</a><a href="#home">Home</a><a href="#send-receive">Send / Receive</a><a href="#view">View</a><a href="#help">Help</a><a href="#message" class="on">Message</a>
  </nav>
  <div class="o-ribbon" id="oRibbon"></div>
  <div class="o-main">
    <nav class="rail">
      <button class="r-exp" aria-label="Expand"><svg class="i12 turn"><use href="#chev"/></svg></button>
      <a href="#inbox" class="vtab on"><span>Inbox</span></a>
      <a href="#sent" class="vtab long"><span>Sent Items</span></a>
      <div class="r-icons">
        <button aria-label="Mail"><svg class="i20"><use href="#mail"/></svg></button>
        <button aria-label="Calendar"><svg class="i20"><use href="#cal"/></svg></button>
        <button aria-label="People"><svg class="i20"><use href="#people2"/></svg></button>
        <button aria-label="Tasks"><svg class="i20"><use href="#task"/></svg></button>
        <button aria-label="More"><svg class="i20"><use href="#more"/></svg></button>
      </div>
    </nav>
    <section class="list">
      <div class="l-head">
        <a href="#focused" class="on">Focused</a><a href="#other">Other</a>
        <button class="sort">By Date <svg class="i12"><use href="#chev"/></svg></button>
        <button class="dir" aria-label="Sort direction"><svg class="i14"><use href="#uparr"/></svg></button>
      </div>
      <div class="l-body">
        <div class="l-items" id="mailList"></div>
        <div class="sbar lbar"><i class="up"></i><b class="thumb"></b><i class="dn"></i></div>
      </div>
    </section>
    <section class="read">
      <div class="r-tools">
        <button><svg class="i16"><use href="#trash"/></svg>Discard</button>
        <button><svg class="i16"><use href="#popout"/></svg>Pop Out</button>
      </div>
      <div class="addr">
        <button class="bx sendb"><svg class="i20"><use href="#send"/></svg>Send</button>
        <button class="bx">To</button>
        <div class="field"><svg class="i12"><use href="#presence"/></svg><a href="#sara">Sara Reid</a></div>
        <button class="bx">Cc</button>
        <div class="field"></div>
      </div>
      <div class="subj"><label for="subj">Subject</label><input id="subj" type="text" value='RE: "Advice Needed" Follow-Up Meeting'></div>
      <div class="letter">
        <div class="text">
          <p>Hi, Sara,</p>
          <p>I really appreciate your support, and I’m so grateful to have you as a resource while I figure out my path forward.</p>
          <hr>
          <p class="meta"><b>From:</b> Sara Reid &lt;Sara.Reid@parker.com&gt;<br><b>Sent:</b> Wednesday, February 23, 2022 5:45 AM<br><b>To:</b> Karis J Courey &lt;karis.courey@parker.com&gt;<br><b>Subject:</b> RE: "Advice Needed" Follow-Up Meeting</p>
          <div class="quoted">
          <p>Good Morning Karis,</p>
          <p>I’m glad to hear that you made a decision!&nbsp; I know it was a tough decision to decline the opportunity since it was in your desired location<br>but I think you made the best choice for you personally and your desired career.&nbsp; And, I want to point out, that your broader way of<br>thinking and assessing the potential impact to the Quality team is much appreciated by myself (proud of you!) and would be by those in<br>the Quality group, too.&nbsp; Wish you the best in all of the available opportunities out there whether it’s with Parker or elsewhere!!&nbsp; I know<br>you’ll succeed with anything you put your mind to.</p>
          <p>I will definitely keep in touch and update you with important happenings in the Dayton facility.</p>
          <p>Best of Luck and I hope you had a good weekend with Carl (or Karl – whichever way he spells it <svg class="i18 emo"><use href="#smile"/></svg>)</p>
          </div>
        </div>
        <div class="sbar rbar"><i class="up"></i><b class="thumb"></b><i class="dn"></i></div>
      </div>
    </section>
  </div>
  <footer class="o-status">
    <span class="grow">Items: 9</span>
    <span>All folders are up to date.</span>
    <span>Connected to: Microsoft Exchange</span>
    <button class="ds"><svg class="i16"><use href="#dispset"/></svg>Display Settings</button>
    <button class="vb on" aria-label="Normal view"><svg class="i16"><use href="#vnormal"/></svg></button>
    <button class="vb" aria-label="Reading view"><svg class="i16"><use href="#vread"/></svg></button>
    <div class="zoomer"><svg class="i10"><use href="#min"/></svg><input type="range" aria-label="Zoom" value="50"><span class="plus">+</span></div>
    <span class="pct">100%</span>
  </footer>
  <div class="taskbar big" data-open="3 4 5 8 9 10 11 12" data-hot="11"></div>
</section>

<section class="screen desk" aria-label="Desktop">
  <svg class="paper" viewBox="0 0 1365 768" preserveAspectRatio="none" aria-hidden="true">
    <defs>
      <linearGradient id="w1"><stop offset="0" stop-color="#00b2ff"/><stop offset=".3" stop-color="#00a8fa"/><stop offset=".5" stop-color="#008ee8"/><stop offset=".68" stop-color="#006edc"/><stop offset=".84" stop-color="#0050ca"/><stop offset="1" stop-color="#003cb4"/></linearGradient>
      <linearGradient id="w2" x2="0" y2="1"><stop offset="0" stop-color="#0048b0" stop-opacity=".32"/><stop offset=".45" stop-color="#0048b0" stop-opacity="0"/><stop offset="1" stop-color="#0048b0" stop-opacity="0"/></linearGradient>
      <radialGradient id="w3"><stop offset="0" stop-color="#006aff"/><stop offset="1" stop-color="#0060f0" stop-opacity="0"/></radialGradient>
      <linearGradient id="w4" x1="0" x2="1"><stop offset="0" stop-color="#00b8ff" stop-opacity=".5"/><stop offset="1" stop-color="#0090ff" stop-opacity=".8"/></linearGradient>
    </defs>
    <path d="M0 0h1365v768H0z" fill="url(#w1)"/>
    <path d="M0 0h1365v768H0z" fill="url(#w2)"/>
    <ellipse cx="1090" cy="340" rx="230" ry="240" fill="url(#w3)"/>
    <path d="M151 0L1095 273v251L0 850V0z" fill="url(#w4)" opacity=".5"/>
    <path d="M151 0L1095 273" stroke="#4cc3ff" stroke-opacity=".45"/>
    <path d="M0 600L850 490l245 34L0 850z" fill="#00b0ff" opacity=".12"/>
    <g fill="#3db2ff" fill-opacity=".6" stroke="#2ee6ff" stroke-width="1" stroke-opacity=".6">
      <path d="M850 308l104-14v102H850zM960 293l135-20v123H960zM850 402h104v102l-104-14zM960 402h135v122l-135-19z"/>
    </g>
    <path d="M850 308v88M850 402v88M1095 273v251" stroke="#4df2ff" stroke-width="2.500"/>
  </svg>
  <div class="d-body">
    <div class="icons" id="icons"></div>
    <article class="note yellow"><div class="n-in"><p class="hd">TO DO</p><p class="gap4">- go through DRs to see if we can add for shipping</p><p>THURSDAY<br>- train shipping on DRs - Thursday or Friday</p></div><i class="nbar"></i></article>
    <article class="note pink"><div class="n-in"><p>- attempted uipath work (can't access)<br>- gm presentation<br>- uipath work</p><p>Wednesday<br>- emails<br>- morning meeting<br>- marko meeting<br>- QNHRS to A, D<br>- get certificate to marko<br>- grant meeting<br>- qnhrs to auto, tyler (still need to N)<br>- set up meeting with tom</p></div><i class="nbar"></i></article>
  </div>
  <div class="taskbar tray" data-open="3 4 5 8 9 10 11 12" data-hot="11" data-warm="6"></div>
</section>

<section class="screen xl" aria-label="Excel">
  <header class="x-title">
    <label class="auto">AutoSave <input type="checkbox" checked><span class="sw">On</span></label>
    <button aria-label="Save"><svg class="i12"><use href="#save"/></svg></button>
    <button class="ml" aria-label="Undo"><svg class="i12"><use href="#undo"/></svg><svg class="i8"><use href="#chev"/></svg></button>
    <button class="ml dim" aria-label="Redo"><svg class="i12"><use href="#redo"/></svg><svg class="i8"><use href="#chev"/></svg></button>
    <button class="ml" aria-label="Touch mode"><svg class="i12"><use href="#touch"/></svg><svg class="i8"><use href="#chev"/></svg></button>
    <button class="ml" aria-label="Customize"><svg class="i8"><use href="#cust"/></svg></button>
    <span class="doc">TestPlan.xlsx&nbsp; -&nbsp; Saved <svg class="i8"><use href="#chev"/></svg></span>
    <label class="x-search"><svg class="i12"><use href="#glass"/></svg><input type="text" placeholder="Search" aria-label="Search"></label>
    <span class="who">Karis J Courey <b>KJ</b></span>
    <div class="wctl sm">
      <button aria-label="Ribbon display"><svg class="i10"><use href="#ribbonup"/></svg></button>
      <button aria-label="Minimize"><svg class="i8"><use href="#min"/></svg></button>
      <button aria-label="Restore"><svg class="i8"><use href="#restore"/></svg></button>
      <button aria-label="Close"><svg class="i8"><use href="#close"/></svg></button>
    </div>
  </header>
  <nav class="x-tabs">
    <a href="#xfile">File</a><a href="#xhome" class="on">Home</a><a href="#insert">Insert</a><a href="#draw">Draw</a><a href="#layout">Page Layout</a><a href="#formulas">Formulas</a><a href="#data">Data</a><a href="#review">Review</a><a href="#xview">View</a><a href="#dev">Developer</a><a href="#xhelp">Help</a><a href="#vault">Autodesk Vault</a><a href="#aras">Aras</a>
    <span class="grow"></span>
    <button><svg class="i10"><use href="#share"/></svg>Share</button>
    <button><svg class="i10"><use href="#comment"/></svg>Comments</button>
  </nav>
  <div class="x-ribbon">
    <div class="grp g-clip"><div class="gb">
      <button class="tall"><svg class="i22"><use href="#paste"/></svg><span>Paste</span><svg class="i8"><use href="#chev"/></svg></button>
      <div class="stack"><button><svg class="i12"><use href="#cut"/></svg>Cut</button><button><svg class="i12"><use href="#copy"/></svg>Copy <svg class="i8"><use href="#chev"/></svg></button><button><svg class="i12"><use href="#brush"/></svg>Format Painter</button></div>
    </div><footer>Clipboard<svg class="i7"><use href="#launch"/></svg></footer></div>
    <div class="grp g-font"><div class="gb rows">
      <div class="row"><label class="combo c87"><select aria-label="Font"><option>Calibri</option></select><svg class="i8"><use href="#chev"/></svg></label><label class="combo c30"><select aria-label="Size"><option>11</option></select><svg class="i8"><use href="#chev"/></svg></label><button class="w17" aria-label="Grow"><svg class="i12"><use href="#growA"/></svg></button><button class="w17" aria-label="Shrink"><svg class="i12"><use href="#shrinkA"/></svg></button></div>
      <div class="row"><button class="w17" aria-label="Bold"><svg class="i10"><use href="#bold"/></svg></button><button class="w17" aria-label="Italic"><svg class="i10"><use href="#italic"/></svg></button><button class="w17" aria-label="Underline"><svg class="i10"><use href="#under"/></svg></button><svg class="i8"><use href="#chev"/></svg><i class="vs"></i><button class="w17" aria-label="Borders"><svg class="i12"><use href="#borders"/></svg></button><svg class="i8"><use href="#chev"/></svg><i class="vs"></i><button class="w17" aria-label="Fill color"><svg class="i12"><use href="#bucket"/></svg></button><svg class="i8"><use href="#chev"/></svg><button class="w17" aria-label="Font color"><svg class="i12"><use href="#fcolor"/></svg></button><svg class="i8"><use href="#chev"/></svg></div>
    </div><footer>Font<svg class="i7"><use href="#launch"/></svg></footer></div>
    <div class="grp g-align"><div class="gb">
      <div class="rows">
      <div class="row"><button class="w17" aria-label="Top"><svg class="i12"><use href="#alT"/></svg></button><button class="w17" aria-label="Middle"><svg class="i12"><use href="#alM"/></svg></button><button class="w17 on" aria-label="Bottom"><svg class="i12"><use href="#alB"/></svg></button><i class="vs"></i><button class="w17" aria-label="Orientation"><svg class="i12"><use href="#orient"/></svg></button><svg class="i8"><use href="#chev"/></svg></div>
      <div class="row"><button class="w17" aria-label="Left"><svg class="i12"><use href="#alL"/></svg></button><button class="w17" aria-label="Center"><svg class="i12"><use href="#alC"/></svg></button><button class="w17" aria-label="Right"><svg class="i12"><use href="#alR"/></svg></button><i class="vs"></i><button class="w17" aria-label="Outdent"><svg class="i12"><use href="#outdent"/></svg></button><button class="w17" aria-label="Indent"><svg class="i12"><use href="#indent"/></svg></button></div>
      </div>
      <div class="rows wrapcol"><div class="row"><button><svg class="i12"><use href="#wrap"/></svg>Wrap Text</button></div><div class="row"><button><svg class="i12"><use href="#merge"/></svg>Merge &amp; Center <svg class="i8 mc"><use href="#chev"/></svg></button></div></div>
    </div><footer>Alignment<svg class="i7"><use href="#launch"/></svg></footer></div>
    <div class="grp g-num"><div class="gb rows">
      <div class="row"><label class="combo c99"><select aria-label="Number format"><option>General</option></select><svg class="i8"><use href="#chev"/></svg></label></div>
      <div class="row"><button class="w17 sym">$</button><svg class="i8"><use href="#chev"/></svg><button class="w17 sym">%</button><button class="w17" aria-label="Comma"><svg class="i12"><use href="#comma"/></svg></button><i class="vs"></i><button class="w17" aria-label="More decimals"><svg class="i12"><use href="#decinc"/></svg></button><button class="w17" aria-label="Fewer decimals"><svg class="i12"><use href="#decdec"/></svg></button></div>
    </div><footer>Number<svg class="i7"><use href="#launch"/></svg></footer></div>
    <div class="grp g-style"><div class="gb">
      <button class="tall w60"><svg class="i20"><use href="#cond"/></svg><span>Conditional<br>Formatting <svg class="i8"><use href="#chev"/></svg></span></button>
      <button class="tall w40"><svg class="i20"><use href="#fmtTable"/></svg><span>Format as<br>Table <svg class="i8"><use href="#chev"/></svg></span></button>
      <div class="gal"><div class="cells"><button class="s-n">Normal</button><button class="s-b">Bad</button><button class="s-g">Good</button><button class="s-y">Neutral</button><button class="s-c">Calculation</button><button class="s-k">Check Cell</button><button class="s-e">Explanatory ...</button><button class="s-i">Input</button></div><div class="gs"><svg class="i8"><use href="#chevup"/></svg><svg class="i8"><use href="#chev"/></svg><svg class="i8"><use href="#cust"/></svg></div></div>
    </div><footer>Styles</footer></div>
    <div class="grp g-cells"><div class="gb">
      <button class="tall w30"><svg class="i22"><use href="#cinsert"/></svg><span>Insert</span><svg class="i8"><use href="#chev"/></svg></button><button class="tall w30"><svg class="i22"><use href="#cdelete"/></svg><span>Delete</span><svg class="i8"><use href="#chev"/></svg></button><button class="tall w30"><svg class="i22"><use href="#cformat"/></svg><span>Format</span><svg class="i8"><use href="#chev"/></svg></button>
    </div><footer>Cells</footer></div>
    <div class="grp g-edit"><div class="gb">
      <div class="stack"><button><svg class="i12"><use href="#sigma"/></svg>AutoSum <svg class="i8 mc"><use href="#chev"/></svg></button><button><svg class="i12"><use href="#fill"/></svg>Fill <svg class="i8"><use href="#chev"/></svg></button><button><svg class="i12"><use href="#clear"/></svg>Clear <svg class="i8"><use href="#chev"/></svg></button></div>
      <button class="tall w30"><svg class="i20"><use href="#sort"/></svg><span>Sort &amp;<br>Filter <svg class="i8"><use href="#chev"/></svg></span></button><button class="tall w30"><svg class="i20"><use href="#glass"/></svg><span>Find &amp;<br>Select <svg class="i8"><use href="#chev"/></svg></span></button>
    </div><footer>Editing</footer></div>
    <div class="grp g-an"><div class="gb"><button class="tall"><svg class="i22"><use href="#analyze"/></svg><span>Analyze<br>Data</span></button></div><footer>Analysis</footer></div>
    <button class="coll" aria-label="Collapse ribbon"><svg class="i10"><use href="#chevup"/></svg></button>
  </div>
  <div class="fbar">
    <label class="nb"><input type="text" value="K19" aria-label="Name box"><i class="tri"></i></label>
    <span class="dots3"></span>
    <div class="fx"><svg class="i10"><use href="#close"/></svg><svg class="i10"><use href="#check"/></svg><em>fx</em></div>
    <label class="fi"><input type="text" aria-label="Formula"><svg class="i8"><use href="#chev"/></svg></label>
  </div>
  <div class="sheet"><table id="grid"></table><div class="sbar xbar"><i class="up"></i><b class="thumb"></b><i class="dn"></i></div></div>
  <div class="stabs"><i class="lt"></i><i class="rt"></i><a href="#sheet1">Sheet1</a><button aria-label="New sheet"><svg class="i14"><use href="#plusc"/></svg></button><span class="grow"></span><span class="dots3"></span><div class="hbar"><i class="lt"></i><b></b><i class="rt"></i></div></div>
  <footer class="x-status">
    <span>Ready</span><svg class="i12"><use href="#macro"/></svg><span class="grow"></span>
    <button class="ds"><svg class="i10"><use href="#dispset"/></svg>Display Settings</button>
    <button class="vb on" aria-label="Normal"><svg class="i10"><use href="#vgrid"/></svg></button>
    <button class="vb" aria-label="Page layout"><svg class="i10"><use href="#vpage"/></svg></button>
    <button class="vb" aria-label="Page break"><svg class="i10"><use href="#vbreak"/></svg></button>
    <div class="zoomer"><svg class="i7"><use href="#min"/></svg><input type="range" aria-label="Zoom" value="50"><span class="plus">+</span></div>
    <span class="pct">100%</span>
  </footer>
  <div class="taskbar" data-open="3 4 5 8 9 10 11 12" data-hot="11"></div>
</section>
</main>
<script src="script.js"></script>
</body>
</html>
```
FILE: script.js
```js
const ico = (name, cls) => `<svg class="${cls}" aria-hidden="true"><use href="#${name}"/></svg>`;

/* Outlook ribbon: [icon, slot width class] ; '|' draws a separator */
const ribbon = [
  ['paste', 34], ['chev', 20], ['brush', 42], '|', 'font', 'size',
  ['bold', 38], ['italic', 38], ['under', 38], ['hilite', 40], ['chev', 18], ['fcolor', 42], ['chev', 18],
  ['bullets', 42], ['chev', 18], ['nums', 42], ['chev', 18], ['outdent', 40], ['indent', 40], ['more', 38],
  ['launch', 18], '|', ['card', 42], ['people', 38], '|', ['clip', 42], ['chev', 10], ['link', 52], ['chev', 18],
  ['sign', 40], ['chev', 10], '|', ['bang', 38], ['down', 42], ['launch', 18], '|', ['read', 42], '|', ['sun', 38], '|', ['more', 42]
];
document.getElementById('oRibbon').innerHTML = ribbon.map(r => {
  if (r === '|') return '<i class="sep"></i>';
  if (r === 'font') return `<label class="combo cut ofont"><select aria-label="Font"><option>Calibri (Bo</option></select>${ico('chev', 'i14')}</label>`;
  if (r === 'size') return `<label class="combo cut osize"><select aria-label="Font size"><option>11</option></select>${ico('chev', 'i14')}</label>`;
  const small = r[0] === 'chev' || r[0] === 'launch';
  return `<button class="w${r[1]} b-${r[0]}" aria-label="${r[0]}">${ico(r[0], small ? 'i10' : 'i20')}</button>`;
}).join('') + `<button class="ocoll" aria-label="Collapse">${ico('chev', 'i14')}</button>`;

/* Message list */
const mails = [
  'Today',
  ['<em>[Draft]</em> Sara Reid', 'RE: "Advice Needed" Follow-Up ...', '5:45 AM', 'Good Morning Karis,&nbsp; I’m glad to', '', 'sel'],
  'Yesterday',
  ['Marko Van Amen', 'DR training', 'Tue 1:23 PM', 'Thank you,&nbsp;&nbsp; Marko Van Amen', ico('clip', 'i16'), ''],
  ['Walker Crystal', 'RE: Bootcamp Question', 'Tue 8:14 AM', 'Hi Karis,&nbsp; I chose Sabio because it', '', ''],
  ['Karl Preisner', '[EXT] More options!', 'Tue 6:30 AM', 'Good morning!&nbsp; I looked into', '', ''],
  'Monday',
  ['Cari Black', 'RE: Ragnar 22 Wasatch back', 'Mon 6:39 PM', 'I’m planning on it.&nbsp; I turn 50 this', '', ''],
  'Last Week',
  ['Richard K. Perry', 'RE: 4300 Run Sheet', 'Thu 2/17', 'Best regards,&nbsp; Richard K. Perry', ico('clip', 'i16') + ico('reply', 'i16'), '']
];
document.getElementById('mailList').innerHTML = mails.map(m => typeof m === 'string'
  ? `<h3>${ico('chev', 'i14')}${m}</h3>`
  : `<article class="${m[5]}"><h4><span>${m[0]}</span><span class="fl">${m[4]}</span></h4><p class="s"><span>${m[1]}</span><time>${m[2]}</time></p><p class="p">${m[3]}</p></article>`).join('');

/* Desktop shortcuts, one array per column; a trailing 0 means no shortcut arrow */
const columns = [
  [['app-bin', 'Recycle Bin', 0], ['app-emg', 'EMG IT<br>Service Portal'], ['app-kronos', 'KRONOS'], ['app-att', 'AT&amp;T Global<br>Network C...'], ['app-blue', 'BlueZone<br>Session M...'], ['app-ibm', 'IBM Notes'], ['app-vbs', 'IE Proxy<br>On_Off.vbs', 0], ['edge', 'Microsoft<br>Edge']],
  [['teams', 'Microsoft<br>Teams'], ['app-self', 'Self Service'], ['edge', 'Genusus'], ['edge', 'Mainframe_...'], ['app-acad', 'AutoCAD<br>2020 - E...'], ['app-mini', 'Minitab 19'], ['app-fold', 'Virtual<br>Backgrounds', 0], ['app-post', 'Postman']],
  [['app-data', 'DataLyzer<br>Spectrum'], ['app-inv', 'Autodesk<br>Inventor P...'], ['app-dwg', 'DWG<br>TrueVie...'], ['app-desk', 'Autodesk<br>Desktop App'], ['orb', 'Mainframe<br>Access E...'], ['chrome', 'Google<br>Chrome']],
  [['app-sap', 'SAP Logon'], ['app-zoom', 'Zoom'], ['app-vault', 'Autodesk<br>Vault Prof...'], ['app-bulb', 'InfoCenter...'], ['edge', 'NearHit_S...']],
  [['app-engage', 'Minitab<br>Engage'], ['app-rev', 'Autodesk<br>Design ...'], ['app-inv', 'Autodesk<br>Inventor Vie...'], ['app-dwg', 'DWG<br>TrueVie...']],
  [['app-card', 'Time Card<br>Hours.xlsx', 0], ['app-forti', 'FortiClient<br>VPN'], ['app-git', 'GitHub<br>Desktop']]
];
document.getElementById('icons').innerHTML = columns.map(c => '<div>' + c.map(([i, t, s]) =>
  `<a href="#app"><span class="pic">${ico(i, 'i20 art')}${s === 0 ? '' : ico('shortcut', 'sc art')}</span><span class="cap">${t}</span></a>`).join('') + '</div>').join('');

/* Taskbars */
const apps = ['win', 'glass', 'tview', 'folder', 'outlook', 'chrome', 'orb', 'edge', 'sticky', 'teamsrec', 'snag', 'excel', 'play'];
document.querySelectorAll('.taskbar').forEach(bar => {
  const open = bar.dataset.open.split(' ').map(Number);
  const isTray = bar.classList.contains('tray');
  const tray = isTray
    ? `<div class="systray"><span>24°F&nbsp; Cloudy</span>${ico('chevup', 'i12')}${['teamsrec', 'shield', 'batt', 'net', 'vol'].map(n => ico(n, 'i12 art')).join('')}</div>` : '';
  const note = isTray ? `<button class="nt" aria-label="Notifications">${ico('notif', 'i12 art')}<b>2</b></button>` : '';
  bar.innerHTML = apps.map((a, i) => `<button class="app${open.includes(i) ? ' open' : ''}${bar.dataset.hot == i ? ' hot' : ''}${bar.dataset.warm == i ? ' warm' : ''}" aria-label="${a}">${ico(a, i < 3 ? 'ti sml' : 'ti art')}</button>`).join('')
    + `<span class="grow"></span>${tray}<div class="clock">12:30 PM<br>2/23/2022</div>${note}`;
});

/* Worksheet: '#' is a shaded cell, '!' marks red text */
const letters = 'DEFGHIJKLMNOPQRSTUVWX'.split('');
const widths = [125, 107, 104, 84, 102, 48, 88, 65, 45];
const rows = {
  5: ['OEC QueueName Changed', 'CCR Updated', 'Assigned to Updated', 'Lookup CCR Exists', 'Look Assign To Exists', 'Status', 'Expected Result', 'SAR', 'In Queue?'],
  6: ['Y', '#', '#', '#', '#', 'New', 'Fail', 'SR0003010304', 'Y'],
  7: ['N', '#', '#', 'Y', 'N', 'New', 'Pass', 'SR0003010293', 'Y'],
  8: ['N', '#', '#', 'N', 'Y', 'New', 'Pass', 'SR0003010295', 'Y'],
  9: ['N', '#', '#', 'N', 'N', 'New', 'Pass', 'SR0003010297', 'Y'],
  10: ['N', '#', '#', 'Y', 'Y', 'New', 'Pass', 'SR0003010298', 'Y'],
  11: ['N', 'Y', 'N', '#', '#', 'New', '!Pass', 'SR0003010299'],
  12: ['N', 'N', 'Y', '#', '#', 'New', '!Pass', 'automatically updates CCR when Assign To is populated / cannot be overridden ... update workflow to analyze Assign To first? ... when Assign To, updates'],
  13: ['N', 'Y', 'Y', '#', '#', 'New', 'Fail', 'SR0003010301'],
  14: ['N', '#', '#', '#', '#', 'Not New', 'Fail', 'SR0003010303']
};
let html = '<colgroup><col style="width:18px">' + letters.map((l, i) => `<col style="width:${widths[i] || (i % 2 ? 45 : 46)}px">`).join('') + '<col style="width:18px"></colgroup>';
html += '<thead><tr><th class="corner"></th>' + letters.map(l => `<th${l === 'K' ? ' class="on"' : ''}>${l}</th>`).join('') + '<th></th></tr></thead><tbody>';
for (let r = 1; r <= 38; r++) {
  html += `<tr class="${r === 5 ? 'bold' : ''}"><th${r === 19 ? ' class="on"' : ''}>${r}</th>`;
  const data = rows[r] || [];
  for (let c = 0; c < 22; c++) {
    const v = data[c] || '';
    const cls = v === '#' ? 'x' : v[0] === '!' ? 'red' : r === 19 && c === 7 ? 'cur' : '';
    let span = 1;
    if (r === 12 && c === 7) span = 15;
    if (r === 5 && c === 8) span = 2;
    html += `<td${cls ? ` class="${cls}"` : ''}${span > 1 ? ` colspan="${span}"` : ''}>${v.replace(/^[#!]/, '')}</td>`;
    c += span - 1;
  }
  html += '</tr>';
}
document.getElementById('grid').innerHTML = html + '</tbody>';
```
FILE: styles.css
```css
* { box-sizing: border-box; }
body { margin: 0; background: #000; color: #fff; font-family: "Open Sans", "Noto Sans", sans-serif; overflow: hidden; }
button, input, select { font: inherit; color: inherit; background: none; border: 0; padding: 0; margin: 0; outline: 0; }
button { display: flex; align-items: center; justify-content: center; white-space: nowrap; }
a { color: inherit; text-decoration: none; }
h3, h4, p { margin: 0; font-weight: 400; }
svg { flex: none; }
use { fill: none; stroke: currentColor; stroke-width: 1.5px; }
.art use, use[href="#smile"], use[href="#presence"] { fill: #000; stroke: none; stroke-width: 1px; }
.sprite { position: absolute; }
.grow { flex: 1; }
.i7 { width: 7px; height: 7px; } .i8 { width: 8px; height: 8px; } .i10 { width: 10px; height: 10px; }
.i12 { width: 12px; height: 12px; } .i14 { width: 14px; height: 14px; } .i16 { width: 16px; height: 16px; }
.i18 { width: 18px; height: 18px; } .i20 { width: 20px; height: 20px; } .i22 { width: 22px; height: 22px; }
.w10 { width: 10px; } .w17 { width: 17px; } .w18 { width: 18px; } .w20 { width: 20px; } .w30 { width: 30px; } .w34 { width: 34px; }
.w38 { width: 38px; } .w40 { width: 40px; } .w42 { width: 42px; } .w52 { width: 52px; } .w60 { width: 60px; }
symbol { overflow: visible; }

.screens { display: grid; grid-template-columns: repeat(3, minmax(0, 1fr)); height: 100vh; }
.screen { display: flex; flex-direction: column; min-width: 0; min-height: 0; position: relative; overflow: hidden; }

/* Outlook */
.outlook { background: #262626; font-size: 12px; }
.o-title { display: flex; align-items: center; height: 36px; padding-left: 15px; background: #252423; color: #b8b8b8; flex: none; }
.o-title .tb { width: 30px; }
.o-title .tb.touch { width: 40px; gap: 4px; justify-content: flex-start; padding-left: 2px; }
.o-search { display: flex; align-items: center; gap: 12px; width: 320px; height: 26px; margin-left: 4px; padding-left: 16px; background: #272727; }
.o-search input { width: 200px; }
.o-search input::placeholder, .x-search input::placeholder { color: inherit; opacity: 1; }
.wctl { display: flex; margin-left: auto; }
.wctl button { width: 49px; height: 30px; }
.o-tabs { display: flex; gap: 33px; padding: 8px 18px 0; height: 32px; background: #323130; font-size: 13px; flex: none; }
.o-tabs a { height: 23px; line-height: 18px; }
.o-tabs .on, .x-tabs .on { font-weight: 700; border-bottom: 3px solid #fff; }
.o-ribbon { display: flex; align-items: center; height: 44px; padding-left: 8px; background: #323130; color: #d2d0ce; flex: none; box-shadow: 0 1px 4px #111; position: relative; }
.o-ribbon button { height: 44px; }
.o-ribbon .sep { width: 1px; height: 34px; margin: 0 2px; background: #4c4a48; }
.o-ribbon .b-launch { align-items: flex-end; padding-bottom: 4px; color: #fff; }
.o-ribbon .b-chev { color: #fff; }
.o-ribbon .b-sun { background: #5d5b59; border: 1px solid #8a8886; }
.o-ribbon .ocoll { margin-left: auto; margin-right: 6px; align-items: flex-end; padding-bottom: 1px; }
.combo { display: flex; align-items: center; position: relative; background: #3b3a39; border: 1px solid #797775; }
.combo select { appearance: none; width: 100%; height: 100%; padding: 0 4px; }
.combo svg { position: absolute; right: 1px; }
.ofont { width: 119px; height: 32px; margin: 0 17px 0 10px; font-size: 14px; }
.osize { width: 54px; height: 32px; margin-right: 9px; font-size: 14px; }
.cut select { clip-path: inset(0 0 12px 0); }
.cut::after { content: ""; position: absolute; left: 4px; bottom: 12px; width: 64px; height: 1px; background: #000; }
.osize::after { width: 22px; }
.o-main { display: flex; flex: 1; min-height: 0; }
.rail { width: 46px; border-right: 1px solid #3d3d3d; display: flex; flex-direction: column; flex: none; }
.rail .r-exp { height: 45px; color: #ddd; }
.turn { transform: rotate(-90deg); }
.vtab { display: flex; align-items: center; justify-content: center; height: 49px; font-size: 11px; font-weight: 600; }
.vtab.on { background: #444; }
.vtab.long { height: 80px; }
.vtab span { writing-mode: vertical-rl; transform: rotate(180deg); }
.r-icons { margin-top: 112px; border-top: 1px solid #484644; padding-top: 8px; display: flex; flex-direction: column; color: #e8e8e8; }
.r-icons button { height: 49px; }
.list { width: 325px; display: flex; flex-direction: column; border-right: 1px solid #484644; flex: none; }
.l-head { display: flex; height: 48px; padding: 18px 0 0 28px; font-size: 15px; line-height: 22px; flex: none; }
.l-head a { height: 30px; margin-right: 18px; color: #ddd; }
.l-head a.on { color: #50b0f5; border-bottom: 3px solid #50b0f5; }
.l-head button { font-size: 12px; height: 24px; gap: 4px; }
.l-head .sort { margin-left: auto; }
.l-head .dir { margin: 0 34px 0 13px; }
.l-body { display: flex; flex: 1; min-height: 0; }
.l-items { width: 295px; overflow: hidden; }
.l-items h3 { display: flex; align-items: center; gap: 8px; height: 23px; padding-left: 3px; font-size: 12px; font-weight: 700; background: #444; border-top: 1px solid #5f5f5f; border-bottom: 1px solid #5f5f5f; }
.l-items article { height: 78px; padding: 14px 26px 0 25px; border-bottom: 1px solid #5f5f5f; }
.l-items article:has(+ h3) { border-bottom: 0; }
.l-items .sel { background: #505050; }
.l-items h4 { display: flex; justify-content: space-between; font-size: 15px; line-height: 19px; color: #f0f0f0; }
.l-items h4 em { color: #f1807e; font-style: normal; }
.fl { display: flex; gap: 6px; align-items: center; color: #ccc; }
.l-items p { display: flex; justify-content: space-between; font-size: 11px; line-height: 17px; white-space: nowrap; }
.l-items .p { color: #b5b5b5; }
.sbar { width: 18px; display: flex; flex-direction: column; background: #333; padding: 0 1px; }
.sbar i { height: 17px; background: #4d4d4d; display: flex; align-items: center; justify-content: center; flex: none; }
.sbar i::after { content: ""; border: 4px solid transparent; border-bottom: 5px solid #969696; border-top: 0; }
.sbar i.dn { margin-top: auto; }
.sbar i.dn::after { border-top: 5px solid #969696; border-bottom: 0; }
.sbar .thumb { margin-top: 1px; background: #525252; }
.lbar { margin-left: 7px; }
.lbar .thumb { height: 56%; }
.read { flex: 1; min-width: 0; display: flex; flex-direction: column; padding-left: 3px; }
.r-tools { display: flex; justify-content: flex-end; gap: 27px; height: 46px; padding: 10px 39px 0 0; flex: none; }
.r-tools button { height: 18px; gap: 9px; }
.addr { display: grid; grid-template-columns: 64px 86px 1fr; grid-template-rows: 39px 39px; gap: 3px 15px; padding: 0 17px 0 19px; flex: none; }
.bx { height: 34px; background: #444; border: 1px solid #636363; color: #e6e6e6; }
.sendb { grid-row: span 2; height: 81px; flex-direction: column; gap: 14px; }
.field { display: flex; gap: 3px; align-items: center; border-bottom: 1px solid #5a5a5a; }
.field a { text-decoration: underline; text-underline-offset: 3px; }
.subj { display: flex; align-items: center; height: 44px; padding-left: 19px; border-bottom: 1px solid #404040; flex: none; }
.subj label { width: 145px; color: #a8a8a8; text-align: right; margin-right: 35px; }
.subj input { flex: 1; }
.letter { display: flex; flex: 1; min-height: 0; }
.text { flex: 1; min-width: 0; padding: 17px 10px 0 11px; overflow: hidden; font-size: 14px; line-height: 20px; color: #f3f3f3; white-space: nowrap; }
.text p { margin-bottom: 20px; }
.text hr { margin: 0 0 4px; border: 0; border-top: 1px solid #5a5a5a; }
.text .meta { line-height: 21px; margin-bottom: 17px; }
.quoted { font-family: Roboto, sans-serif; font-size: 16px; color: #99b0f5; }
.emo { vertical-align: -4px; margin: -2px 0; }
.rbar { flex: none; }
.rbar .thumb { height: 71px; }
.o-status { display: flex; align-items: center; height: 24px; padding: 0 7px 0 8px; background: #323130; border-top: 1px solid #3e3d3c; font-size: 11px; flex: none; }
.o-status span { margin-right: 16px; }
.ds { gap: 2px; }
.o-status .vb { width: 42px; height: 23px; }
.o-status .ds { margin-right: 12px; }
.vb.on { background: #605e5c; }
.zoomer { display: flex; align-items: center; gap: 6px; color: #ddd; }
.o-status .plus { margin-right: 12px; font-size: 14px; }
.o-status .pct { margin: 0; }
input[type=range] { appearance: none; width: 105px; height: 14px; background: linear-gradient(#fff, #fff) center / 100% 2px no-repeat; }
input[type=range]::-webkit-slider-thumb { appearance: none; width: 6px; height: 13px; background: #fff; border: 0; }

/* Taskbars */
.taskbar { display: flex; height: 28px; background: linear-gradient(90deg, #233a41, #22373f 30%, #1d2d3e 65%, #1a2444); flex: none; position: relative; }
.app { width: 35px; height: 100%; position: relative; }
.ti { width: 18px; height: 18px; } .ti.sml { width: 14px; height: 14px; }
.open::after { content: ""; position: absolute; left: 3px; right: 3px; bottom: 0; height: 2px; background: #76b9ed; }
.hot { background: #4d6068; }
.warm { background: #3b4d56; }
.clock { font-size: 8px; line-height: 12px; padding: 2px 5px 0 0; text-align: right; }
.big { height: 43px; }
.big .app { width: 53px; } .big .ti { width: 25px; height: 25px; } .big .ti.sml { width: 19px; height: 19px; }
.big .open::after { left: 5px; right: 5px; height: 3px; }
.app.hot::after { left: 0; right: 0; }
.big .clock { font-size: 12px; line-height: 20px; padding: 3px 6px 0 0; }
.systray { display: flex; align-items: center; gap: 5px; font-size: 9px; }
.systray span { margin-right: 5px; }
.tray .clock { text-align: center; margin-left: 9px; padding: 2px 0 0; }
.nt { width: 34px; margin-right: 8px; position: relative; }
.nt b { position: absolute; right: 4px; bottom: 3px; width: 10px; height: 10px; border-radius: 5px; border: 1px solid #aaa; background: #333; font-size: 7px; line-height: 8px; }

/* Desktop */
.paper { position: absolute; inset: 0; width: 100%; height: 100%; }
.d-body { flex: 1; min-height: 0; position: relative; }
.icons { display: flex; padding-top: 4px; }
.icons > div { width: 54px; }
.icons a { display: flex; flex-direction: column; align-items: center; height: 57px; }
.pic { display: flex; position: relative; }
.sc { position: absolute; left: 0; bottom: 0; width: 6px; height: 6px; }
.cap { margin-top: 4px; font-size: 8px; line-height: 11px; text-align: center; white-space: nowrap; text-shadow: 0 1px 1px #000, 0 0 2px #000; }
.note { position: absolute; color: #333; font-size: 10px; line-height: 13px; padding: 30px 14px 0 9px; box-shadow: 0 1px 5px rgba(0, 0, 0, .5); }
.n-in { overflow: hidden; }
.note p + p { margin-top: 13px; }
.note p.gap4 { margin-top: 55px; margin-bottom: 39px; }
.yellow { left: 910px; top: 8px; width: 239px; height: 202px; background: #fff7d1; }
.yellow .hd { margin-top: -8px; font-weight: 700; }
.pink { left: 914px; top: 297px; width: 239px; height: 215px; background: #ffe4f1; }
.pink .n-in p:first-child { margin-top: -6px; }
.nbar { position: absolute; right: 2px; width: 1px; background: #777; }
.yellow .nbar { top: 37px; height: 73px; } .pink .nbar { bottom: 11px; height: 12px; }

/* Excel */
.xl { background: #262626; font-size: 9px; }
.x-title { display: flex; align-items: center; height: 24px; padding-left: 15px; background: #0a0a0a; flex: none; position: relative; }
.x-title button { flex: none; }
.x-title .ml { margin-left: 9px; gap: 2px; }
.x-title .dim { color: #555; }
.auto { display: flex; align-items: center; gap: 4px; margin-right: 9px; }
.auto input { position: absolute; opacity: 0; width: 27px; }
.sw { width: 27px; height: 12px; border-radius: 6px; background: #fff; color: #111; font-size: 8px; line-height: 12px; padding-left: 4px; position: relative; }
.sw::after { content: ""; position: absolute; right: 2px; top: 2px; width: 8px; height: 8px; border-radius: 4px; background: #111; }
.doc { margin-left: 120px; width: 220px; white-space: nowrap; }
.x-search { display: flex; align-items: center; gap: 9px; width: 262px; height: 17px; padding-left: 13px; background: #363636; }
.who { display: flex; align-items: center; gap: 7px; margin-left: auto; }
.who b { width: 17px; height: 17px; border-radius: 9px; background: #5e382d; font-weight: 400; font-size: 8px; line-height: 17px; text-align: center; }
.wctl.sm { margin-left: 8px; } .wctl.sm button { width: 33px; height: 20px; }
.x-tabs { display: flex; align-items: center; gap: 20px; height: 24px; padding: 0 9px 0 12px; background: #323130; flex: none; }
.x-tabs a { line-height: 14px; height: 17px; white-space: nowrap; }
.x-tabs .on { border-width: 2px; font-weight: 600; }
.x-tabs button { height: 17px; gap: 3px; padding: 0 6px; margin-left: -14px; background: #454443; border: 1px solid #605e5c; border-radius: 2px; font-weight: 600; }
.x-ribbon { display: flex; height: 66px; background: #323130; flex: none; box-shadow: 0 1px 4px #111; position: relative; }
.grp { display: flex; flex-direction: column; position: relative; flex: none; }
.grp::after { content: ""; position: absolute; right: 0; top: 0; height: 63px; width: 1px; background: #4a4846; }
.gb { display: flex; height: 52px; flex: none; }
.grp footer { text-align: center; line-height: 14px; font-size: 8px; }
.grp footer svg { position: absolute; right: 2px; bottom: 3px; }
.rows { flex-direction: column; display: flex; }
.row { display: flex; align-items: center; height: 16px; margin-top: 6px; }
.row + .row { height: 18px; margin-top: 5px; }
.row button { gap: 2px; height: 16px; }
.row .on { background: #5d5b59; border: 1px solid #797775; }
.vs { width: 1px; height: 16px; margin: 0 2px; background: #4a4846; }
.tall { flex-direction: column; justify-content: flex-start; gap: 2px; padding-top: 2px; line-height: 12px; height: 52px; flex: none; }
.tall svg { margin-bottom: 1px; }
.tall span svg { margin: 0; vertical-align: -1px; }
.stack { display: flex; flex-direction: column; align-items: flex-start; }
.stack button { height: 17px; gap: 2px; }
.sym { font-size: 12px; }
.g-clip { width: 117px; } .g-clip .tall { width: 36px; padding-left: 6px; } .g-clip .gb { gap: 1px; }
.g-font { width: 165px; } .g-font .gb { padding-left: 6px; }
.g-align { width: 199px; } .g-align .gb { padding-left: 6px; }
.wrapcol { margin-left: 5px; padding-left: 5px; } .mc { margin-left: 4px; }
.g-num { width: 111px; } .g-num .gb { padding-left: 6px; }
.xl .combo { height: 17px; } .c87 { width: 87px; margin-right: 2px; } .c30 { width: 30px; margin-right: 2px; } .c99 { width: 99px; }
.xl .combo select { padding: 0 2px; }
.g-style { width: 423px; } .g-style .gb { gap: 0; padding-left: 2px; } .g-style .tall { padding-top: 4px; }
.gal { display: flex; margin: 2px 0 0 auto; margin-right: 8px; height: 44px; background: #444; border: 1px solid #3a3a3a; }
.cells { display: grid; grid-template-columns: repeat(4, 72px); gap: 3px; padding: 3px 3px 3px 2px; }
.cells button { justify-content: flex-start; padding-left: 3px; color: #111; background: #fff; border: 1px solid transparent; font-size: 9px; height: 17px; }
.cells .s-n { outline: 1px solid #999; } .cells .s-b { background: #ffc7ce; color: #9c0006; } .cells .s-g { background: #c6efce; color: #006100; }
.cells .s-y { background: #ffeb9c; color: #9c5700; } .cells .s-c { background: #f2f2f2; color: #fa7d00; border-color: #7f7f7f; font-weight: 600; }
.cells .s-k { background: #a5a5a5; color: #fff; border: 2px solid #3f3f3f; font-weight: 700; padding-left: 2px; } .cells .s-e { color: #7f7f7f; font-style: italic; }
.cells .s-i { background: #ffcc99; color: #3f3f76; border-color: #7f7f7f; }
.gs { display: flex; flex-direction: column; justify-content: space-around; align-items: center; width: 12px; background: #323130; }
.g-cells { width: 101px; } .g-cells .gb { padding-left: 5px; }
.g-edit { width: 142px; } .g-edit .gb { padding-left: 7px; gap: 2px; } .g-edit .stack { width: 66px; }
.g-an { width: 45px; } .g-an .tall { width: 45px; }
.coll { margin-left: auto; margin-right: 4px; align-items: flex-end; padding-bottom: 1px; }
.fbar { display: flex; align-items: center; gap: 2px; height: 33px; padding: 1px 3px 0 4px; flex: none; }
.fbar label, .fx { display: flex; align-items: center; height: 18px; background: #363636; border: 1px solid #444; }
.nb { width: 243px; padding: 0 5px 0 4px; } .nb input { width: 100%; }
.tri { border: 3px solid transparent; border-top: 4px solid #fff; border-bottom: 0; }
.dots3 { width: 2px; height: 10px; background: repeating-linear-gradient(#fff 0 2px, transparent 2px 4px); }
.fbar .dots3 { margin: 0 8px; }
.fx { width: 78px; justify-content: space-around; color: #777; } .fx em { font-family: "Liberation Serif", serif; font-size: 12px; color: #fff; font-weight: 700; }
.fi { flex: 1; padding-right: 1px; } .fi input { width: 100%; }
.sheet { display: flex; flex: 1; min-height: 0; background: #fff; border-bottom: 1px solid #999; overflow: hidden; }
table { flex: 1; width: 0; height: calc(100% - 3px); table-layout: fixed; border-collapse: separate; border-spacing: 0; background: #fff; color: #111; font-size: 9px; line-height: 10px; }
th { background: #262626; color: #c8c8c8; font-weight: 400; padding: 0; overflow: hidden; }
thead th { height: 14px; border-right: 1px solid #555; border-bottom: 1px solid #999; }
tbody th { border-bottom: 1px solid #444; }
th.corner { background: linear-gradient(135deg, #262626 60%, #777 60%); }
thead th.on { background: #606060; border-bottom: 2px solid #217346; color: #eee; } tbody th.on { background: #606060; }
td { padding: 0 0 0 2px; border-right: 1px solid #d4d4d4; border-bottom: 1px solid #d4d4d4; white-space: nowrap; vertical-align: bottom; }
.bold td { font-weight: 600; }
td.x { background: #595959; border-color: #595959; } td.red { color: #f00; }
td.cur { outline: 2px solid #217346; outline-offset: -1px; }
.xbar { width: 15px; border: solid #262626; border-width: 2px 2px 0; padding: 0; } .xbar i { height: 10px; } .xbar i::after { border-width: 0 3px 4px; }
.xbar i.dn::after { border-width: 4px 3px 0; }
.xbar .thumb { height: 40%; }
.stabs { display: flex; align-items: center; height: 20px; padding-left: 18px; flex: none; }
.stabs i { border: 3px solid transparent; margin-right: 17px; } .stabs i.lt { border-right: 4px solid #aaa; border-left: 0; } .stabs i.rt { border-left: 4px solid #aaa; border-right: 0; }
.stabs a { align-self: flex-start; margin: 0 22px 0 9px; height: 17px; padding: 0 8px; background: #fff; color: #217346; font-weight: 700; line-height: 16px; border-bottom: 1px solid #217346; }
.hbar { display: flex; align-items: center; width: 519px; height: 11px; margin: 0 15px 0 11px; padding: 0 3px; background: #363636; }
.stabs .hbar i.lt { margin: 0; } .stabs .hbar i.rt { margin: 0 0 0 5px; } .hbar b { flex: 1; height: 9px; margin-left: 66px; background: #505050; }
.x-status { display: flex; align-items: center; height: 16px; padding: 0 5px; background: #323130; border-top: 1px solid #3e3d3c; font-size: 8px; flex: none; }
.x-status > svg { margin-left: 13px; }
.x-status .vb { width: 29px; height: 15px; } .x-status .ds { margin-right: 13px; font-size: 8px; }
.x-status .zoomer { gap: 3px; margin-left: 2px; } .x-status .plus { font-size: 10px; }
.x-status input[type=range] { width: 71px; height: 10px; background-size: 100% 1px; } .x-status input[type=range]::-webkit-slider-thumb { width: 4px; height: 9px; }
.x-status .pct { margin-left: 10px; }
```
